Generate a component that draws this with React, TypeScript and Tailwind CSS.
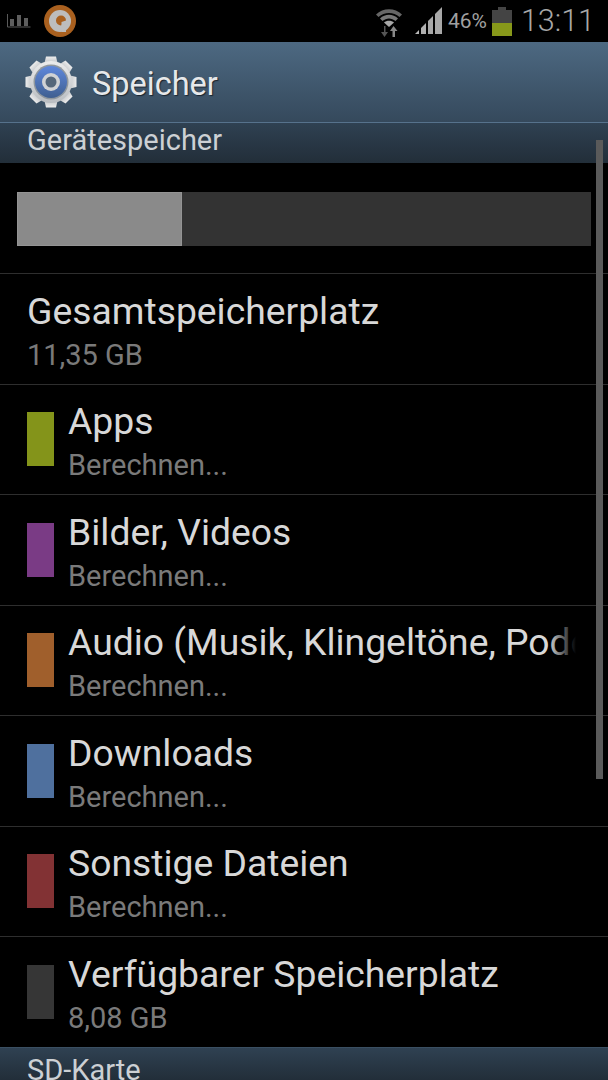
const ROWS = [
  { color: 'bg-[#84941a]', title: 'Apps', sub: 'Berechnen...' },
  { color: 'bg-[#7a3b85]', title: 'Bilder, Videos', sub: 'Berechnen...' },
  { color: 'bg-[#a05f2c]', title: 'Audio (Musik, Klingeltöne, Podcasts usw.)', sub: 'Berechnen...', clipped: true },
  { color: 'bg-[#4f709e]', title: 'Downloads', sub: 'Berechnen...' },
  { color: 'bg-[#823234]', title: 'Sonstige Dateien', sub: 'Berechnen...' },
  { color: 'bg-[#363636]', title: 'Verfügbarer Speicherplatz', sub: '8,08 GB' },
];

function BarsIcon() {
  return (
    <svg width="24" height="16" viewBox="0 0 24 16">
      <rect x="3" y="6" width="4" height="7" fill="#5e5e5e" />
      <rect x="10" y="2" width="4" height="11" fill="#5e5e5e" />
      <rect x="17" y="5" width="4" height="8" fill="#5e5e5e" />
      <path d="M0.5 1V14H23.5" fill="none" stroke="#5a5a5a" strokeWidth="1" />
    </svg>
  );
}

function SwirlIcon() {
  return (
    <svg width="32" height="32" viewBox="0 0 32 32">
      <circle cx="16" cy="16" r="16" fill="#a9601f" />
      <circle cx="16" cy="16" r="11" fill="#bdbdbd" />
      <circle cx="17" cy="15.5" r="5" fill="#a9601f" />
      <path d="M22 15.5V27H17.5V17Z" fill="#bdbdbd" />
      <path d="M17.5 19.5H21V21.5H17.5Z" fill="#bdbdbd" />
    </svg>
  );
}

function WifiIcon() {
  return (
    <svg width="28" height="32" viewBox="0 0 28 32">
      <path d="M1 9.5C8 2.500 20 2.500 27 9.500L24.500 12C18.500 6.500 9.500 6.500 3.500 12Z" fill="#666" />
      <path d="M5 13.500C10 8.500 18 8.500 23 13.500L20.500 16C16.500 12.500 11.500 12.500 7.500 16Z" fill="#777" />
      <path d="M9 17.500C11.500 15 16.500 15 19 17.500L14 22Z" fill="#a8a8a8" />
      <path d="M9 21V27H6V27L9.500 32L13 27H10.500V21Z" fill="#555" />
      <path d="M18.500 21L15 26H17.500V32H20V26H22.500Z" fill="#888" />
    </svg>
  );
}

function SignalIcon() {
  return (
    <svg width="28" height="28" viewBox="0 0 28 28">
      <path d="M0 27L4 23V27Z" fill="#b8b8b8" />
      <path d="M6 21L11 16V27H6Z" fill="#b0b0b0" />
      <path d="M13 14L18 9V27H13Z" fill="#a8a8a8" />
      <path d="M20 7L27 0V27H20Z" fill="#a8a8a8" />
    </svg>
  );
}

function BatteryIcon() {
  return (
    <svg width="20" height="29" viewBox="0 0 20 29">
      <rect x="6" y="0" width="8" height="3" fill="#444" />
      <rect x="0" y="3" width="20" height="13" fill="#444" />
      <rect x="0" y="16" width="20" height="13" fill="#87981a" />
    </svg>
  );
}

function GearIcon() {
  const teeth = [0, 45, 90, 135, 180, 225, 270, 315];
  return (
    <svg width="54" height="54" viewBox="0 0 54 54">
      <defs>
        <linearGradient id="gear-metal" x1="0" y1="0" x2="0" y2="1">
          <stop offset="0" stopColor="#ececec" />
          <stop offset="1" stopColor="#b8bcc0" />
        </linearGradient>
        <linearGradient id="gear-blue" x1="0" y1="0" x2="0" y2="1">
          <stop offset="0" stopColor="#5f88dc" />
          <stop offset="1" stopColor="#3f5f90" />
        </linearGradient>
      </defs>
      {teeth.map((a) => (
        <path key={a} d="M22 1.500H32L34 10H20Z" fill="url(#gear-metal)" transform={`rotate(${a} 27 27)`} />
      ))}
      <circle cx="27" cy="27" r="21" fill="url(#gear-metal)" />
      <circle cx="27" cy="27" r="17.500" fill="#8f979e" />
      <circle cx="27" cy="27" r="16" fill="url(#gear-blue)" />
      <circle cx="27" cy="27" r="9" fill="#d0d2d4" />
      <circle cx="27" cy="27" r="5.500" fill="#55677a" />
    </svg>
  );
}

function StatusBar() {
  return (
    <div className="flex h-[42px] shrink-0 items-center bg-black pl-[7px] pr-[13px]">
      <BarsIcon />
      <div className="ml-[13px]">
        <SwirlIcon />
      </div>
      <div className="ml-auto flex items-center">
        <WifiIcon />
        <div className="ml-[12px]">
          <SignalIcon />
        </div>
        <span className="ml-[5px] text-[21px] leading-none text-[#a0a0a0]">46%</span>
        <div className="ml-[5px]">
          <BatteryIcon />
        </div>
        <span className="ml-[9px] text-[30.5px] font-light leading-none text-[#a8a8a8]">13:11</span>
      </div>
    </div>
  );
}

function SectionHeader({ label, last }: { label: string; last?: boolean }) {
  return (
    <div
      className={`flex shrink-0 overflow-hidden bg-gradient-to-b from-[#2f4152] to-[#222e39] pl-[27px] text-[29px] leading-[34px] text-[#ccd0d4] ${
        last ? 'h-[32px] pt-[5px]' : 'h-[40px]'
      }`}
    >
      {label}
    </div>
  );
}

function Row({ color, title, sub, clipped }: { color?: string; title: string; sub: string; clipped?: boolean }) {
  return (
    <div className="flex h-[110.5px] shrink-0 items-center border-t border-[#2e2e2e] pl-[27px] pr-[32px]">
      {color && <div className={`mr-[14px] h-[54px] w-[27px] shrink-0 ${color}`} />}
      <div className="relative min-w-0 flex-1 overflow-hidden pt-[3px]">
        <div className="whitespace-nowrap text-[37.3px] leading-[44px] text-[#d8d8d8]">{title}</div>
        <div className="mt-[5px] whitespace-nowrap text-[29px] leading-[34px] text-[#7a7a7a]">{sub}</div>
        {clipped && <div className="absolute right-0 top-[3px] h-[44px] w-[28px] bg-gradient-to-r from-transparent to-black" />}
      </div>
    </div>
  );
}

export default function App() {
  return (
    <div className="relative flex h-[1080px] w-[608px] flex-col overflow-hidden bg-black font-['Roboto',sans-serif]">
      <StatusBar />
      <div className="flex h-[80px] shrink-0 items-center bg-gradient-to-b from-[#4d6982] to-[#35495c] pl-[24px]">
        <GearIcon />
        <span className="ml-[14px] pt-[5px] text-[32.5px] text-[#e6e8ea] [text-shadow:1px_1px_1px_#1a2530]">Speicher</span>
      </div>
      <div className="h-px shrink-0 bg-[#56728c]" />
      <SectionHeader label="Gerätespeicher" />
      <div className="h-[110px] shrink-0 px-[17px] pt-[29px]">
        <div className="flex h-[54px] bg-[#333333]">
          <div className="w-[165px] border border-[#949494] bg-[#8a8a8a]" />
        </div>
      </div>
      <Row title="Gesamtspeicherplatz" sub="11,35 GB" />
      {ROWS.map((r) => (
        <Row key={r.title} color={r.color} title={r.title} sub={r.sub} clipped={r.clipped} />
      ))}
      <div className="h-px shrink-0 bg-[#3a4f62]" />
      <SectionHeader label="SD-Karte" last />
      <div className="absolute left-[596px] top-[140px] h-[639px] w-[7px] bg-[#5a5a5a]" />
    </div>
  );
}
